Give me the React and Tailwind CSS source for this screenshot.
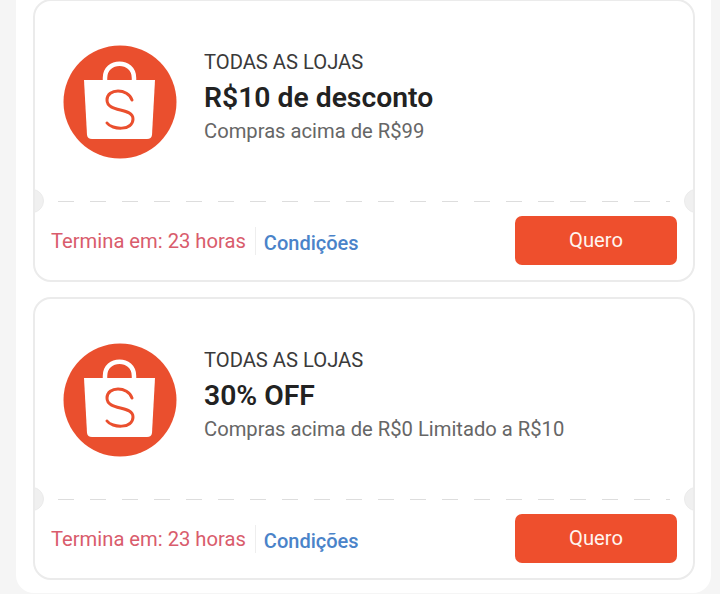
import React from 'react';

const ShopeeLogo = () => (
  <svg viewBox="0 0 114 114" className="w-[114px] h-[114px]">
    <circle cx="57" cy="57" r="56.5" fill="#ea4f2e" />
    <path d="M42 36 V33 C42 14 71 14 71 33 V36" fill="none" stroke="#fff" strokeWidth="4.5" />
    <path d="M21 35 H92 L89 90 Q88.5 94 84 94 H29 Q24.5 94 24 90 Z" fill="#fff" />
    <path
      d="M69 55 C65 43 44 43 44 55 C44 68 70 62 70 74 C70 86 49 85 44 78"
      fill="none"
      stroke="#ea4f2e"
      strokeWidth="3"
      strokeLinecap="round"
    />
  </svg>
);

const Coupon = ({ title, subtitle }) => (
  <div className="relative h-[283px] rounded-[18px] border-2 border-[#ebebeb] bg-white overflow-hidden">
    <div className="flex items-start h-[200px] pl-[28px] pt-[44px]">
      <ShopeeLogo />
      <div className="ml-[27px] pt-[3px] font-['Roboto',sans-serif]">
        <div className="text-[20.2px] leading-[28px] text-[#3a3a3a]">TODAS AS LOJAS</div>
        <div className="text-[28.3px] leading-[36px] mt-[4px] font-semibold text-[#222222]">{title}</div>
        <div className="text-[20.2px] leading-[28px] mt-[1px] text-[#666666]">{subtitle}</div>
      </div>
    </div>
    <div className="mx-[23px] h-[1px] bg-[repeating-linear-gradient(90deg,#dddddd_0,#dddddd_16px,transparent_16px,transparent_32px)]" />
    <div className="absolute left-[-15px] top-[188px] w-[24px] h-[24px] rounded-full bg-[#f0f0f0] border border-[#ebebeb]" />
    <div className="absolute right-[-15px] top-[188px] w-[24px] h-[24px] rounded-full bg-[#f0f0f0] border border-[#ebebeb]" />
    <div className="flex items-center pl-[16px] pr-[16px] mt-[14px] font-['Roboto',sans-serif]">
      <span className="text-[20.2px] leading-[28px] mt-[1px] text-[#d95c6c]">Termina em: 23 horas</span>
      <span className="w-[1px] h-[28px] ml-[9px] mr-[8px] bg-[#eeeeee]" />
      <span className="text-[20px] leading-[28px] mt-[4px] font-medium text-[#4a83c9]">Condições</span>
      <button className="ml-auto w-[162px] h-[49px] rounded-[7px] bg-[#ee4f2d] text-[#fff5ef] text-[20.2px]">Quero</button>
    </div>
  </div>
);

export default function App() {
  return (
    <div className="h-[594px] overflow-hidden bg-[#f5f5f5]">
      <div className="ml-[16px] mr-[9px] h-[594px] bg-white rounded-b-[18px] pl-[17px] pr-[16px] -mt-[1px] flex flex-col gap-[15px]">
        <Coupon title="R$10 de desconto" subtitle="Compras acima de R$99" />
        <Coupon title="30% OFF" subtitle="Compras acima de R$0 Limitado a R$10" />
      </div>
    </div>
  );
}
